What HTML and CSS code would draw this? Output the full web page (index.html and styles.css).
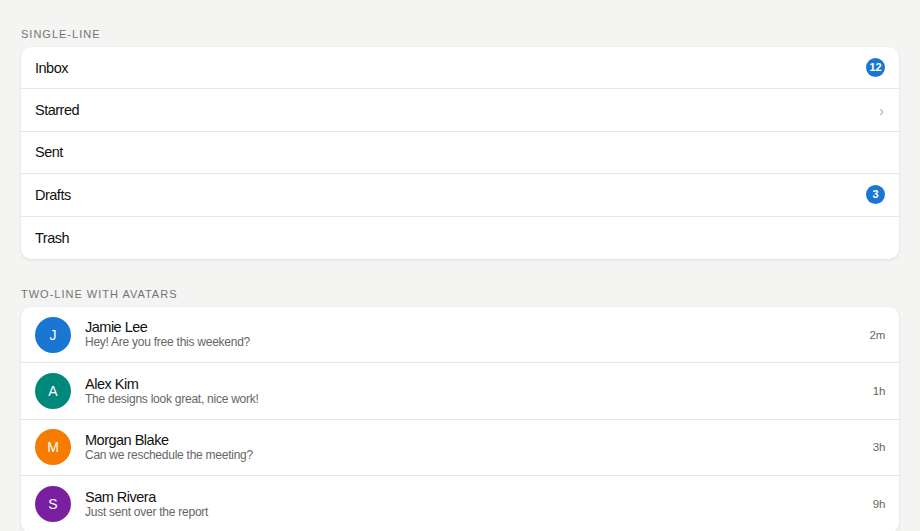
FILE: index.html
```html
<!DOCTYPE html>
<html lang="en">
<head>
    <meta charset="UTF-8">
    <meta name="viewport" content="width=device-width, initial-scale=1.0">
    <title>Lists</title>
    <link rel="stylesheet" href="styles.css">
</head>
<body>

    <!-- Single-line list -->
    <section class="section">
        <h3 class="section-label">Single-line</h3>
        <ul class="list">
            <li class="row"><span class="row-title">Inbox</span><span class="badge">12</span></li>
            <li class="row"><span class="row-title">Starred</span><span class="chevron">&rsaquo;</span></li>
            <li class="row"><span class="row-title">Sent</span></li>
            <li class="row"><span class="row-title">Drafts</span><span class="badge">3</span></li>
            <li class="row"><span class="row-title">Trash</span></li>
        </ul>
    </section>

    <!-- Two-line list with avatars -->
    <section class="section">
        <h3 class="section-label">Two-line with avatars</h3>
        <ul class="list">
            <li class="row row-two">
                <span class="avatar blue">J</span>
                <div class="row-text">
                    <div class="row-name">Jamie Lee</div>
                    <div class="row-sub">Hey! Are you free this weekend?</div>
                </div>
                <span class="row-time">2m</span>
            </li>
            <li class="row row-two">
                <span class="avatar teal">A</span>
                <div class="row-text">
                    <div class="row-name">Alex Kim</div>
                    <div class="row-sub">The designs look great, nice work!</div>
                </div>
                <span class="row-time">1h</span>
            </li>
            <li class="row row-two">
                <span class="avatar orange">M</span>
                <div class="row-text">
                    <div class="row-name">Morgan Blake</div>
                    <div class="row-sub">Can we reschedule the meeting?</div>
                </div>
                <span class="row-time">3h</span>
            </li>
            <li class="row row-two">
                <span class="avatar purple">S</span>
                <div class="row-text">
                    <div class="row-name">Sam Rivera</div>
                    <div class="row-sub">Just sent over the report</div>
                </div>
                <span class="row-time">9h</span>
            </li>
        </ul>
    </section>

</body>
</html>
```

FILE: styles.css
```css
body {
    font-family: "Liberation Sans", Arial, sans-serif;
    margin: 0;
    padding: 27px 21px;
    background-color: #f4f4f3;
    color: #111;
}
.section {
    margin-bottom: 28px;
}
.section-label {
    margin: 0 0 6px;
    font-size: 11px;
    line-height: 14px;
    font-weight: normal;
    letter-spacing: 1px;
    text-transform: uppercase;
    color: #737373;
}
.list {
    list-style: none;
    margin: 0;
    padding: 0;
    background-color: #fff;
    border-radius: 10px;
    box-shadow: 0 1px 3px rgba(0, 0, 0, 0.1);
    overflow: hidden;
}
.row {
    display: flex;
    align-items: center;
    height: 42.4px;
    padding: 0 14px;
    border-bottom: 1px solid #e6e6e6;
    box-sizing: border-box;
}
.row:last-child {
    border-bottom: none;
}
.row-title {
    flex: 1;
    font-size: 14.5px;
    letter-spacing: -0.5px;
}
.badge {
    min-width: 19px;
    height: 19px;
    padding: 0 2px;
    box-sizing: border-box;
    border-radius: 10px;
    background-color: #1976d2;
    color: #fff;
    font-size: 11px;
    font-weight: bold;
    line-height: 19px;
    text-align: center;
}
.chevron {
    color: #aaa;
    font-size: 15px;
    margin-right: 1px;
}
.row-two {
    height: 56.4px;
}
.avatar {
    width: 36px;
    height: 36px;
    border-radius: 50%;
    color: #fff;
    font-size: 14px;
    line-height: 36px;
    text-align: center;
    margin-right: 14px;
    flex-shrink: 0;
}
.blue { background-color: #1976d2; }
.teal { background-color: #00897b; }
.orange { background-color: #f57c00; }
.purple { background-color: #7b1fa2; }
.row-text {
    flex: 1;
}
.row-name {
    font-size: 14.5px;
    line-height: 16px;
    letter-spacing: -0.5px;
}
.row-sub {
    font-size: 12px;
    line-height: 15px;
    letter-spacing: -0.25px;
    color: #666;
}
.row-time {
    font-size: 11.5px;
    letter-spacing: -0.3px;
    color: #666;
}
```
